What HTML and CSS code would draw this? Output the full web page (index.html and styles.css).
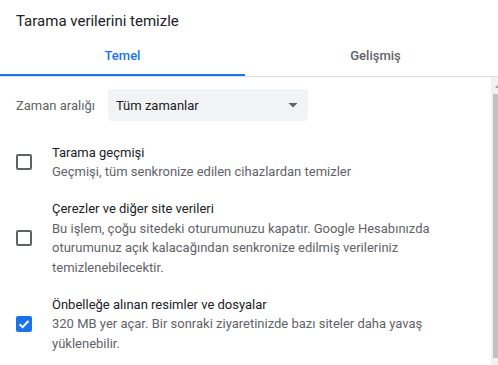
FILE: index.html
```html
<!DOCTYPE html>
<html lang="tr">
<head>
<meta charset="utf-8">
<title>Tarama verilerini temizle</title>
<link rel="stylesheet" href="styles.css">
</head>
<body>
<div class="dialog">
  <div class="title">Tarama verilerini temizle</div>
  <div class="tabs">
    <div class="tab tab-basic selected">Temel</div>
    <div class="tab tab-advanced">Gelişmiş</div>
  </div>
  <div class="body">
    <div class="content">
      <div class="time-row">
        <span class="time-label">Zaman aralığı</span>
        <div class="select">
          <span class="select-text">Tüm zamanlar</span>
          <svg class="select-arrow" width="10" height="5" viewBox="0 0 10 5"><path d="M0.5 0L9.5 0L5 4.6Z" fill="#5f6368"/></svg>
        </div>
      </div>
      <div class="items">
        <div class="item">
          <span class="box"></span>
          <div class="item-text">
            <div class="item-title">Tarama geçmişi</div>
            <div class="item-desc">Geçmişi, tüm senkronize edilen cihazlardan temizler</div>
          </div>
        </div>
        <div class="item">
          <span class="box"></span>
          <div class="item-text">
            <div class="item-title">Çerezler ve diğer site verileri</div>
            <div class="item-desc">Bu işlem, çoğu sitedeki oturumunuzu kapatır. Google Hesabınızda oturumunuz açık kalacağından senkronize edilmiş verileriniz temizlenebilecektir.</div>
          </div>
        </div>
        <div class="item">
          <span class="box checked">
            <svg width="16" height="16" viewBox="0 0 16 16"><path d="M3.6 8.2L6.6 11.1L12.4 5" fill="none" stroke="#fff" stroke-width="2"/></svg>
          </span>
          <div class="item-text">
            <div class="item-title">Önbelleğe alınan resimler ve dosyalar</div>
            <div class="item-desc">320 MB yer açar. Bir sonraki ziyaretinizde bazı siteler daha yavaş yüklenebilir.</div>
          </div>
        </div>
      </div>
    </div>
    <div class="scrollbar">
      <div class="sb-button">
        <svg width="7" height="4" viewBox="0 0 7 4"><path d="M0 4L3.5 0L7 4Z" fill="#a3a3a3"/></svg>
      </div>
      <div class="sb-thumb"></div>
    </div>
  </div>
</div>
</body>
</html>
```

FILE: styles.css
```css
html, body {
  margin: 0;
  padding: 0;
  overflow: hidden;
  background: #ffffff;
}

body {
  font-family: Roboto, "Liberation Sans", Arial, sans-serif;
  font-size: 13px;
  color: #202124;
}

.dialog {
  width: 506px;
}

.title {
  padding: 11px 16px 0;
  font-size: 15px;
  line-height: 20px;
  color: #202124;
}

.tabs {
  display: flex;
  border-bottom: 1px solid #dadce0;
}

.tab {
  padding: 15px 0 8px;
  line-height: 20px;
  font-weight: 500;
  font-size: 13px;
  text-align: center;
  color: #5f6368;
  border-bottom: 2px solid transparent;
}

.tab-basic {
  width: 245px;
}

.tab-advanced {
  flex: 1;
}

.tab.selected {
  color: #1a73e8;
  border-bottom-color: #1a73e8;
}

.body {
  display: flex;
  min-height: 300px;
}

.content {
  flex: 1;
  padding: 12px 10px 0 16px;
}

.time-row {
  display: flex;
  align-items: center;
}

.time-label {
  color: #5f6368;
  margin-right: 13px;
}

.select {
  width: 200px;
  height: 32px;
  box-sizing: border-box;
  background: #f1f3f4;
  border-radius: 4px;
  display: flex;
  align-items: center;
  justify-content: space-between;
  padding: 0 10px 0 8px;
  color: #202124;
}

.select-arrow {
  display: block;
}

.items {
  margin-top: 21.5px;
  display: flex;
  flex-direction: column;
  gap: 17.5px;
}

.item {
  display: flex;
  align-items: center;
}

.box {
  flex: none;
  width: 16px;
  height: 16px;
  box-sizing: border-box;
  border: 2px solid #5f6368;
  border-radius: 2px;
  margin-right: 20px;
}

.box.checked {
  border: none;
  background: #1a73e8;
}

.box svg {
  display: block;
}

.item-text {
  line-height: 19.5px;
}

.item-title {
  color: #202124;
}

.item-desc {
  color: #5f6368;
}

.scrollbar {
  width: 15px;
  flex: none;
  background: #f1f1f1;
  display: flex;
  flex-direction: column;
}

.sb-button {
  height: 17px;
  display: flex;
  align-items: center;
  justify-content: center;
}

.sb-button svg {
  display: block;
}

.sb-thumb {
  height: 264px;
  margin: 0 2px;
  background: #c1c1c1;
}
```
